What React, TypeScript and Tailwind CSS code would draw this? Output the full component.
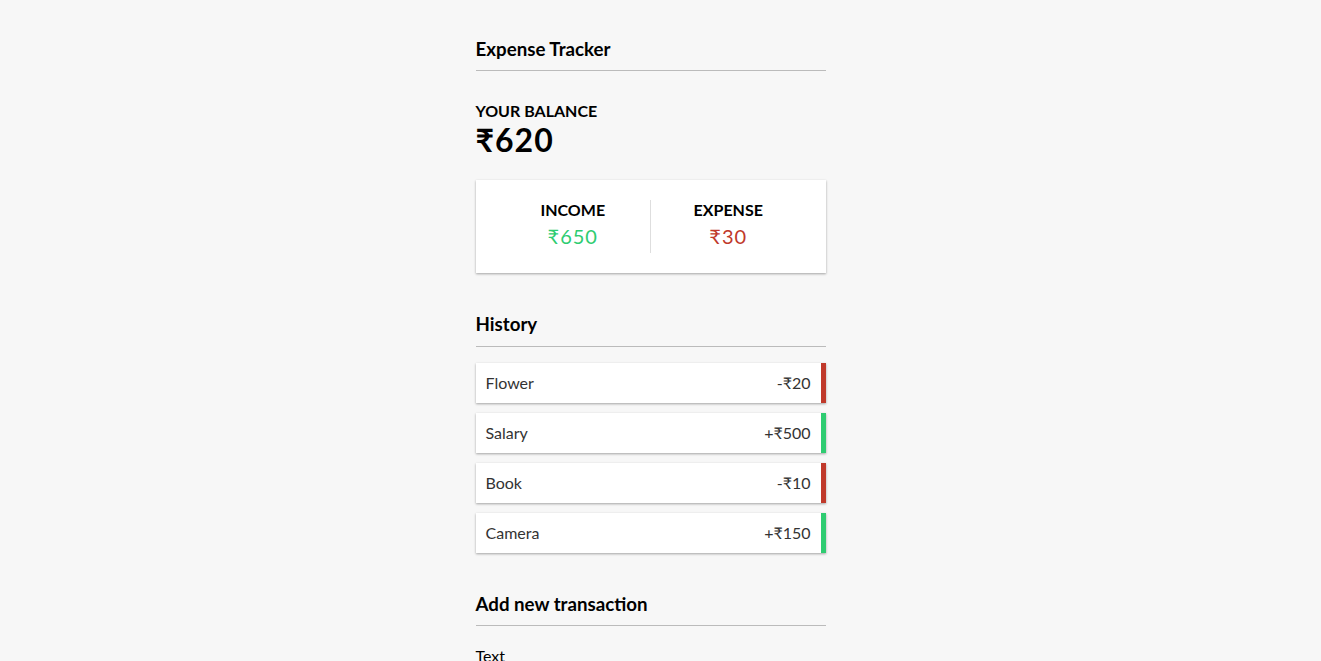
import type { ReactNode } from 'react'

interface Transaction {
  id: number
  text: string
  amount: number
}

const transactions: Transaction[] = [
  { id: 1, text: 'Flower', amount: -20 },
  { id: 2, text: 'Salary', amount: 500 },
  { id: 3, text: 'Book', amount: -10 },
  { id: 4, text: 'Camera', amount: 150 },
]

const shadow = 'shadow-[0_1px_3px_rgba(0,0,0,0.12),0_1px_2px_rgba(0,0,0,0.24)]'

const SectionTitle = ({ children, className = '' }: { children: ReactNode; className?: string }) => (
  <h3 className={`text-[18.72px] font-bold border-b border-[#bbb] pb-[10px] ${className}`}>{children}</h3>
)

export default function App() {
  const amounts = transactions.map((t) => t.amount)
  const total = amounts.reduce((a, b) => a + b, 0)
  const income = amounts.filter((a) => a > 0).reduce((a, b) => a + b, 0)
  const expense = -amounts.filter((a) => a < 0).reduce((a, b) => a + b, 0)

  return (
    <div className="min-h-screen bg-[#f7f7f7] font-['Lato','Noto_Sans',sans-serif] text-[16px] leading-[1.2] text-black flex flex-col items-center">
      <div className="w-[350px] mr-[20px] pt-[38px] pb-[2px]">
        {/* Header */}
        <SectionTitle>Expense Tracker</SectionTitle>

        {/* Balance */}
        <div className="mt-[30px]">
          <h4 className="text-[16px] font-bold uppercase">Your Balance</h4>
          <h1 className="text-[32px] font-bold tracking-[1px]">₹{total}</h1>
        </div>

        {/* Income / Expense */}
        <div className={`mt-[21px] bg-white p-5 flex ${shadow}`}>
          <div className="flex-1 text-center border-r border-[#dedede]">
            <h4 className="text-[16px] font-bold uppercase">Income</h4>
            <p className="text-[20px] tracking-[1px] my-[5px] text-[#2ecc71]">₹{income}</p>
          </div>
          <div className="flex-1 text-center">
            <h4 className="text-[16px] font-bold uppercase">Expense</h4>
            <p className="text-[20px] tracking-[1px] my-[5px] text-[#c0392b]">₹{expense}</p>
          </div>
        </div>

        {/* History */}
        <SectionTitle className="mt-10">History</SectionTitle>
        <ul className="mt-4 flex flex-col gap-[10px]">
          {transactions.map((t) => (
            <li
              key={t.id}
              className={`bg-white text-[#333] leading-[20px] flex justify-between p-[10px] border-r-[5px] ${shadow} ${
                t.amount < 0 ? 'border-[#c0392b]' : 'border-[#2ecc71]'
              }`}
            >
              {t.text}
              <span>
                {t.amount < 0 ? '-' : '+'}₹{Math.abs(t.amount)}
              </span>
            </li>
          ))}
        </ul>

        {/* Form */}
        <SectionTitle className="mt-10">Add new transaction</SectionTitle>
        <form className="mt-[10px]">
          <div>
            <label className="inline-block my-[10px]">Text</label>
            <input
              type="text"
              placeholder="Enter text..."
              className="block w-full border border-[#dedede] rounded-[2px] text-[16px] p-[10px] bg-white"
            />
          </div>
          <div>
            <label className="inline-block my-[10px]">
              Amount <br />
              (negative - expense, positive - income)
            </label>
            <input
              type="number"
              placeholder="Enter amount..."
              className="block w-full border border-[#dedede] rounded-[2px] text-[16px] p-[10px] bg-white"
            />
          </div>
          <button
            type="button"
            className={`block w-full bg-[#9c88ff] text-white text-[16px] p-[10px] mt-[10px] ${shadow}`}
          >
            Add transaction
          </button>
        </form>
      </div>
    </div>
  )
}
